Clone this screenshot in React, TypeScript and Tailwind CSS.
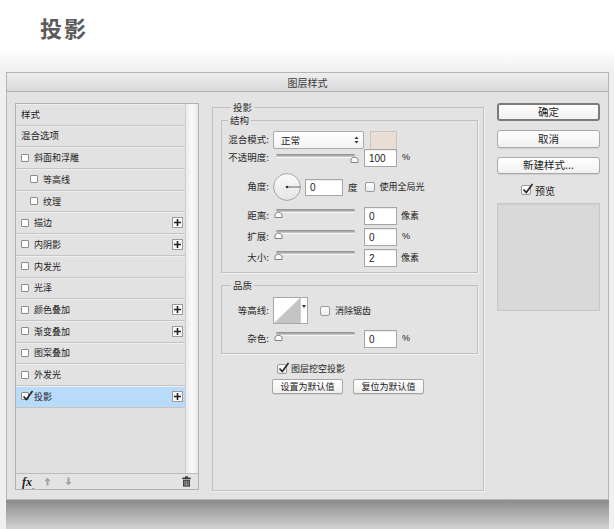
import React from 'react';

const CJK = "font-['Noto_Sans_CJK_SC','Noto_Sans',sans-serif]";
const NUM = "font-['Liberation_Sans','Noto_Sans_CJK_SC',sans-serif]";

function CheckMark() {
  return (
    <svg className="absolute left-[0px] top-[-3px]" width="12" height="12" viewBox="0 0 12 12">
      <path d="M1.5 6.5 L4.3 9.5 L10.5 1" fill="none" stroke="#222" strokeWidth="1.6" />
    </svg>
  );
}

function SmallCheck({ checked = false }: { checked?: boolean }) {
  return (
    <span className="relative inline-block w-[8px] h-[8px] shrink-0 border border-[#8c8c8c] bg-white rounded-[1px]">
      {checked && <CheckMark />}
    </span>
  );
}

function Check({ checked = false }: { checked?: boolean }) {
  return (
    <span className="relative inline-block w-[10px] h-[10px] shrink-0 border border-[#9a9a9a] bg-gradient-to-b from-white to-[#ececec] rounded-[2px]">
      {checked && <CheckMark />}
    </span>
  );
}

function PlusBtn() {
  return (
    <span className="w-[11px] h-[11px] shrink-0 border border-[#9c9c9c] bg-[#fafafa] flex items-center justify-center">
      <svg width="7" height="7" viewBox="0 0 7 7">
        <path d="M3.5 0v7M0 3.5h7" stroke="#222" strokeWidth="1.6" />
      </svg>
    </span>
  );
}

type Item = { label: string; cb?: boolean; indent?: boolean; plus?: boolean; checked?: boolean; selected?: boolean };

const items: Item[] = [
  { label: '样式' },
  { label: '混合选项' },
  { label: '斜面和浮雕', cb: true },
  { label: '等高线', cb: true, indent: true },
  { label: '纹理', cb: true, indent: true },
  { label: '描边', cb: true, plus: true },
  { label: '内阴影', cb: true, plus: true },
  { label: '内发光', cb: true },
  { label: '光泽', cb: true },
  { label: '颜色叠加', cb: true, plus: true },
  { label: '渐变叠加', cb: true, plus: true },
  { label: '图案叠加', cb: true },
  { label: '外发光', cb: true },
  { label: '投影', cb: true, checked: true, plus: true, selected: true },
];

function ListRow({ it }: { it: Item }) {
  return (
    <div
      className={
        'flex items-center h-[21.7px] shrink-0 border-b border-[#c4c4c4] pr-[2px] shadow-[inset_0_1px_0_#efefef] ' +
        (it.selected ? 'bg-[#b8dbf9] ' : 'bg-[#e2e2e2] ') +
        (it.indent ? 'pl-[14px]' : 'pl-[5px]')
      }
    >
      {it.cb && <SmallCheck checked={it.checked} />}
      <span className={it.cb ? 'ml-[5px] text-[9px] text-[#222] leading-none' : 'text-[9.5px] text-[#222] leading-none'}>{it.label}</span>
      <span className="flex-1" />
      {it.plus && <PlusBtn />}
    </div>
  );
}

function Slider({ thumbRight = false, track = 3 }: { thumbRight?: boolean; track?: number }) {
  return (
    <div className="relative w-[87px] h-[18px] shrink-0 ml-[4px]">
      <div
        className={
          'absolute left-[3px] w-[79px] h-[3px] rounded-full bg-gradient-to-b from-[#8a8a8a] to-[#cfcfcf] shadow-[0_1px_0_#f6f6f6] ' +
          (track === 5 ? 'top-[5px]' : 'top-[2px]')
        }
      />
      <svg
        className={
          'absolute ' +
          (thumbRight ? 'left-[77px] ' : 'left-[1px] ') +
          (track === 5 ? 'top-[6px]' : 'top-[3px]')
        }
        width="9"
        height="8"
        viewBox="0 0 9 8"
      >
        <path d="M1 7.5 V4 Q4.5 0.5 8 4 V7.5 Z" fill="#fdfdfd" stroke="#777" strokeWidth="0.9" />
      </svg>
    </div>
  );
}

function TextBox({ value, wide = false }: { value: string; wide?: boolean }) {
  return (
    <div
      className={
        'shrink-0 border border-[#a6a6a6] bg-white shadow-[inset_0_1px_1px_rgba(0,0,0,0.08)] flex items-center pl-[4px] text-[10px] text-[#222] ' +
        NUM +
        ' ' +
        (wide ? 'w-[38px] h-[17px]' : 'w-[33px] h-[18px]')
      }
    >
      {value}
    </div>
  );
}

function Label({ text }: { text: string }) {
  return <span className="w-[47px] shrink-0 text-right text-[9.5px] text-[#2a2a2a] leading-none">{text}</span>;
}

function Dial() {
  return (
    <svg width="28" height="28" viewBox="0 0 28 28" className="ml-[4px] shrink-0">
      <defs>
        <linearGradient id="dialg" x1="0" y1="0" x2="0" y2="1">
          <stop offset="0" stopColor="#fbfbfb" />
          <stop offset="1" stopColor="#e4e4e4" />
        </linearGradient>
      </defs>
      <circle cx="14" cy="14" r="13.4" fill="url(#dialg)" stroke="#9d9d9d" strokeWidth="0.9" />
      <line x1="14" y1="14" x2="27.4" y2="14" stroke="#555" strokeWidth="0.9" />
      <circle cx="14" cy="14" r="1.3" fill="#333" />
    </svg>
  );
}

function MacButton({ text, primary = false, h17 = false }: { text: string; primary?: boolean; h17?: boolean }) {
  return (
    <div
      className={
        'w-[103px] flex items-center justify-center rounded-[3px] bg-gradient-to-b from-white to-[#f1f1f1] text-[10.5px] text-[#222] leading-none ' +
        (primary
          ? 'h-[18px] border-2 border-[#7c7c7c] '
          : 'border border-[#a9a9a9] shadow-[0_1px_0_rgba(0,0,0,0.08)] ' + (h17 ? 'h-[17px] ' : 'h-[18px] '))
      }
    >
      {text}
    </div>
  );
}

function SmallButton({ text }: { text: string }) {
  return (
    <div className="w-[71px] h-[15px] flex items-center justify-center rounded-[2px] border border-[#a6a6a6] bg-gradient-to-b from-white to-[#f0f0f0] shadow-[0_1px_0_rgba(0,0,0,0.08)] text-[9px] text-[#222] leading-none">
      {text}
    </div>
  );
}

export default function App() {
  return (
    <div className={'w-[614px] h-[529px] bg-white flex flex-col overflow-hidden ' + CJK}>
      <div className="h-[72px] shrink-0 bg-gradient-to-b from-white from-[70%] to-[#eeeeee] pl-[40px] pt-[16px]">
        <div className="text-[22px] font-bold text-[#5a5a5a] leading-none tracking-[2px]">投影</div>
      </div>
      <div className="flex-1 bg-[#f0f0f0] flex flex-col">
        <div className="ml-[6px] w-[603px] h-[428px] border border-[#b5b5b5] bg-[#e3e3e3] flex flex-col">
          <div className="h-[19px] shrink-0 bg-gradient-to-b from-[#efefef] to-[#d8d8d8] border-b border-[#b3b3b3] flex items-center justify-center text-[10px] text-[#3a3a3a]">
            图层样式
          </div>
          <div className="flex-1 flex items-start pt-[11px] pl-[8px] pr-[8px] gap-[13px]">
            {/* Left list */}
            <div className="w-[184px] h-[387px] shrink-0 border border-[#b2b2b2] flex flex-col bg-[#e0e0e0]">
              <div className="flex flex-1 min-h-0">
                <div className="flex-1 flex flex-col">
                  {items.map((it) => (
                    <ListRow key={it.label} it={it} />
                  ))}
                </div>
                <div className="w-[13px] border-l border-[#cdcdcd] bg-gradient-to-r from-[#ececec] via-[#fafafa] to-[#e8e8e8]" />
              </div>
              <div className="h-[16px] shrink-0 border-t border-[#bcbcbc] bg-[#e3e3e3] flex items-center pl-[6px] pr-[7px]">
                <span className="font-['Liberation_Serif',serif] italic font-bold text-[12px] text-[#222] leading-none">
                  fx
                </span>
                <span className="text-[8px] text-[#444] leading-none mt-[8px]">.</span>
                <svg width="7" height="9" viewBox="0 0 7 9" className="ml-[10px]">
                  <path d="M3.5 0.5 L6.5 4 H4.6 V8.5 H2.4 V4 H0.5 Z" fill="#a3a3a3" />
                </svg>
                <svg width="7" height="9" viewBox="0 0 7 9" className="ml-[14px]">
                  <path d="M3.5 8.5 L6.5 5 H4.6 V0.5 H2.4 V5 H0.5 Z" fill="#a3a3a3" />
                </svg>
                <span className="flex-1" />
                <svg width="9" height="11" viewBox="0 0 9 11">
                  <rect x="3" y="0.3" width="3" height="1.5" fill="#333" />
                  <rect x="0.3" y="1.6" width="8.4" height="1.6" fill="#333" />
                  <path d="M1 3.8 H8 V10.7 H1 Z" fill="#444" />
                  <path d="M2.8 4.8 V9.8 M4.5 4.8 V9.8 M6.2 4.8 V9.8" stroke="#bbb" strokeWidth="0.7" />
                </svg>
              </div>
            </div>

            {/* Center */}
            <fieldset className="w-[272px] h-[390px] shrink-0 mt-[-2px] border border-[#c0c0c0] shadow-[1px_1px_0_#f3f3f3] pl-[8px] pr-[5px] flex flex-col">
              <legend className="ml-[10px] px-[2px] text-[9.5px] leading-[12px] text-[#2a2a2a]">投影</legend>
              <fieldset className="mt-[1px] border border-[#c0c0c0] shadow-[1px_1px_0_#f3f3f3] pb-[5px] flex flex-col">
                <legend className="ml-[6px] px-[2px] text-[9.5px] leading-[12px] text-[#2a2a2a]">结构</legend>
                {/* 混合模式 */}
                <div className="flex items-center h-[18px] mt-[5px]">
                  <Label text="混合模式:" />
                  <div className="ml-[4px] w-[91px] h-[18px] shrink-0 border border-[#aaaaaa] rounded-[2px] bg-gradient-to-b from-white to-[#f3f3f3] flex items-center pl-[7px] pr-[4px] text-[9.5px] text-[#222]">
                    <span>正常</span>
                    <span className="flex-1" />
                    <svg width="5" height="8" viewBox="0 0 5 8">
                      <path d="M2.5 0.5 L4.5 3 H0.5 Z M2.5 7.5 L4.5 5 H0.5 Z" fill="#333" />
                    </svg>
                  </div>
                  <div className="ml-[6px] w-[27px] h-[19px] shrink-0 bg-[#e9ddd5] border border-[#cbc4c0]" />
                </div>
                {/* 不透明度 */}
                <div className="flex items-center h-[18px] mt-[0px]">
                  <Label text="不透明度:" />
                  <Slider thumbRight track={5} />
                  <div className="ml-[4px]">
                    <TextBox value="100" />
                  </div>
                  <span className={'ml-[5px] text-[9px] text-[#222] ' + NUM}>%</span>
                </div>
                {/* 角度 */}
                <div className="flex items-center h-[30px] mt-[5px]">
                  <Label text="角度:" />
                  <Dial />
                  <div className="ml-[4px]">
                    <TextBox value="0" wide />
                  </div>
                  <span className="ml-[5px] text-[9.5px] text-[#222]">度</span>
                  <span className="ml-[7px] flex">
                    <Check />
                  </span>
                  <span className="ml-[5px] text-[9px] text-[#222]">使用全局光</span>
                </div>
                {/* 距离 */}
                <div className="flex items-center h-[18px] mt-[5px]">
                  <Label text="距离:" />
                  <Slider />
                  <div className="ml-[4px]">
                    <TextBox value="0" />
                  </div>
                  <span className="ml-[4px] text-[9px] text-[#222]">像素</span>
                </div>
                <div className="flex items-center h-[18px] mt-[3px]">
                  <Label text="扩展:" />
                  <Slider />
                  <div className="ml-[4px]">
                    <TextBox value="0" />
                  </div>
                  <span className={'ml-[5px] text-[9px] text-[#222] ' + NUM}>%</span>
                </div>
                <div className="flex items-center h-[18px] mt-[3px]">
                  <Label text="大小:" />
                  <Slider />
                  <div className="ml-[4px]">
                    <TextBox value="2" />
                  </div>
                  <span className="ml-[4px] text-[9px] text-[#222]">像素</span>
                </div>
              </fieldset>

              <fieldset className="mt-[6px] border border-[#c0c0c0] shadow-[1px_1px_0_#f3f3f3] pb-[5px] flex flex-col">
                <legend className="ml-[9px] px-[2px] text-[9.5px] leading-[12px] text-[#2a2a2a]">品质</legend>
                <div className="flex items-center h-[27px] mt-[6px]">
                  <Label text="等高线:" />
                  <div className="ml-[4px] h-[27px] shrink-0 border border-[#a8a8a8] bg-white flex">
                    <svg width="26" height="25" viewBox="0 0 26 25">
                      <path d="M0 25 L26 0 L26 25 Z" fill="#c4c4c4" />
                    </svg>
                    <div className="w-[7px] border-l border-[#d0d0d0] flex items-start justify-center pt-[7px]">
                      <svg width="4" height="3" viewBox="0 0 4 3">
                        <path d="M0 0 H4 L2 3 Z" fill="#333" />
                      </svg>
                    </div>
                  </div>
                  <span className="ml-[12px] flex">
                    <Check />
                  </span>
                  <span className="ml-[5px] text-[9px] text-[#222]">消除锯齿</span>
                </div>
                <div className="flex items-center h-[18px] mt-[6px]">
                  <Label text="杂色:" />
                  <Slider />
                  <div className="ml-[4px]">
                    <TextBox value="0" />
                  </div>
                  <span className={'ml-[5px] text-[9px] text-[#222] ' + NUM}>%</span>
                </div>
              </fieldset>

              <div className="flex items-center h-[12px] mt-[9px] ml-[56px]">
                <Check checked />
                <span className="ml-[4px] text-[9px] text-[#222]">图层挖空投影</span>
              </div>
              <div className="flex items-center mt-[4px] ml-[51px] gap-[10px]">
                <SmallButton text="设置为默认值" />
                <SmallButton text="复位为默认值" />
              </div>
            </fieldset>

            {/* Right column */}
            <div className="w-[103px] shrink-0 flex flex-col">
              <MacButton text="确定" primary />
              <div className="mt-[9px]">
                <MacButton text="取消" />
              </div>
              <div className="mt-[9px]">
                <MacButton text="新建样式..." h17 />
              </div>
              <div className="mt-[10px] h-[12px] flex items-center pl-[24px]">
                <Check checked />
                <span className="ml-[4px] text-[10px] text-[#222]">预览</span>
              </div>
              <div className="mt-[7px] h-[108px] border border-[#c8c8c8] bg-[#d9d9d9] shadow-[inset_0_1px_2px_rgba(0,0,0,0.06)]" />
            </div>
          </div>
        </div>
        <div className="ml-[6px] w-[603px] flex-1 bg-gradient-to-b from-[#8b8b8b] to-[#d3d3d3]" />
      </div>
    </div>
  );
}
